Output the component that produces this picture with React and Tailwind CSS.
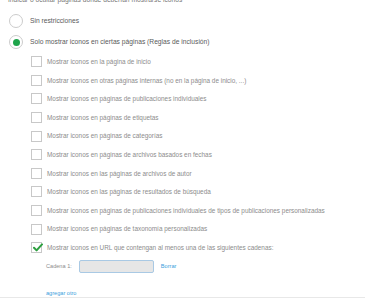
const OPTIONS = [
  'Mostrar iconos en la página de inicio',
  'Mostrar iconos en otras páginas internas (no en la página de inicio, ...)',
  'Mostrar iconos en páginas de publicaciones individuales',
  'Mostrar iconos en páginas de etiquetas',
  'Mostrar iconos en páginas de categorías',
  'Mostrar iconos en páginas de archivos basados en fechas',
  'Mostrar iconos en las páginas de archivos de autor',
  'Mostrar iconos en las páginas de resultados de búsqueda',
  'Mostrar iconos en páginas de publicaciones individuales de tipos de publicaciones personalizadas',
  'Mostrar iconos en páginas de taxonomía personalizadas',
  'Mostrar iconos en URL que contengan al menos una de las siguientes cadenas:'
]

function Radio({ checked, label }) {
  return (
    <div className="flex h-[21px] items-center">
      <span className="flex h-[14px] w-[14px] items-center justify-center rounded-full border border-[#cccccc] bg-white">
        {checked && (
          <span className="h-[7px] w-[7px] rounded-full bg-[#1ea44a]" />
        )}
      </span>
      <span className="ml-[7px] text-[6.7px] text-[#5a5a5a]">{label}</span>
    </div>
  )
}

function Check({ checked, label }) {
  return (
    <div className="flex h-[18.6px] items-center">
      <span className="relative h-[11px] w-[11px] border border-[#c8c8c8] bg-white">
        {checked && (
          <svg
            className="absolute left-[1px] top-[0px]"
            width="10"
            height="9"
            viewBox="0 0 10 9"
          >
            <path
              d="M1 4.8 L3.6 7.4 L9 1.4"
              fill="none"
              stroke="#2c9f3f"
              strokeWidth="2"
              strokeLinecap="round"
              strokeLinejoin="round"
            />
          </svg>
        )}
      </span>
      <span className="ml-[5px] text-[6.4px] text-[#8c8c8c]">{label}</span>
    </div>
  )
}

export default function App() {
  return (
    <div className="h-[300px] w-full overflow-hidden bg-white font-['Liberation_Sans',Arial,sans-serif]">
      <div className="-mt-[4px] h-[8px] pl-[8px] text-[6.7px] leading-[8px] text-[#777]">
        Indicar o ocultar páginas donde deberían mostrarse iconos
      </div>

      <div className="mt-[6.5px] pl-[9px]">
        <Radio label="Sin restricciones" />
        <Radio checked label="Solo mostrar iconos en ciertas páginas (Reglas de inclusión)" />
      </div>

      <div className="pl-[31px]">
        {OPTIONS.map((label, i) => (
          <Check key={i} label={label} checked={i === OPTIONS.length - 1} />
        ))}
      </div>

      <div className="flex h-[19px] items-center pl-[46px]">
        <span className="text-[5.6px] text-[#8c8c8c]">Cadena 1:</span>
        <div className="ml-[7px] h-[13px] w-[75px] rounded-[2px] border border-[#a9c9e4] bg-[#e6e6e6]" />
        <span className="ml-[7px] text-[5.6px] text-[#3aa0dc]">Borrar</span>
      </div>

      <div className="h-[21px] overflow-hidden pl-[46px] pt-[14px]">
        <span className="block text-[5.6px] leading-[7px] text-[#3aa0dc]">agregar otro</span>
      </div>
      <div className="border-t border-[#e8e8e8]" />
    </div>
  )
}
